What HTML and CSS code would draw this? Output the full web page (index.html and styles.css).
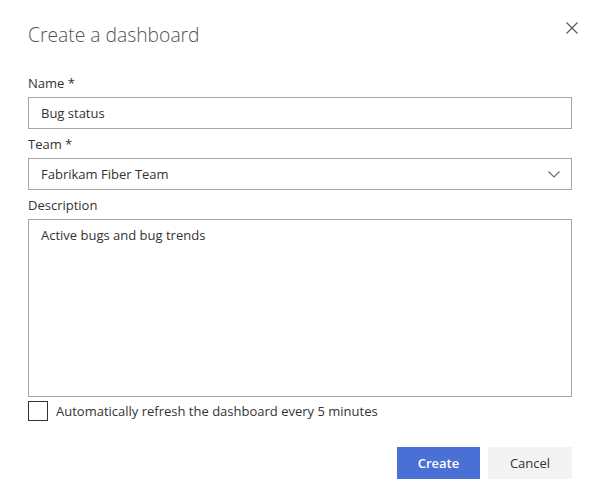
FILE: index.html
```html
<!DOCTYPE html>
<html lang="en">
<head>
<meta charset="utf-8">
<title>Create a dashboard</title>
<link rel="stylesheet" href="styles.css">
</head>
<body>
<div class="dialog">
  <div class="header">
    <h1 class="title">Create a dashboard</h1>
    <button class="close" aria-label="Close">
      <svg width="12" height="12" viewBox="0 0 12 12"><path d="M0.5 0.5 L11.5 11.5 M11.5 0.5 L0.5 11.5" stroke="#555" stroke-width="1.1" fill="none"/></svg>
    </button>
  </div>
  <div class="form">
    <label class="label">Name *</label>
    <div class="field">Bug status</div>
    <label class="label">Team *</label>
    <div class="field select">
      <span>Fabrikam Fiber Team</span>
      <svg class="chev" width="12" height="7" viewBox="0 0 12 7"><path d="M0.5 0.5 L6 6 L11.5 0.5" stroke="#666" stroke-width="1.1" fill="none"/></svg>
    </div>
    <label class="label">Description</label>
    <div class="field area">Active bugs and bug trends</div>
    <label class="check">
      <span class="box"></span>
      <span>Automatically refresh the dashboard every 5 minutes</span>
    </label>
  </div>
  <div class="footer">
    <button class="btn primary">Create</button>
    <button class="btn secondary">Cancel</button>
  </div>
</div>
</body>
</html>
```

FILE: styles.css
```css
* { box-sizing: border-box; }
html, body { margin: 0; padding: 0; background: #fff; }
body {
  font-family: "Open Sans", "Noto Sans", sans-serif;
  font-size: 13px;
  color: #333;
}
.dialog {
  width: 599px;
  padding: 0 27px 0 28px;
}
.header {
  display: flex;
  justify-content: space-between;
  align-items: flex-start;
  height: 73px;
}
.title {
  margin: 21px 0 0;
  font-size: 19.3px;
  font-weight: 300;
  line-height: 28px;
  color: #555;
}
.close {
  margin: 22px -6px 0 0;
  padding: 0;
  border: 0;
  background: none;
  width: 12px;
  height: 12px;
  display: block;
}
.close svg { display: block; }
.form { display: flex; flex-direction: column; }
.label {
  display: block;
  line-height: 20px;
  margin-bottom: 4px;
}
.field {
  height: 32px;
  border: 1px solid #a6a6a6;
  padding: 0 12px;
  display: flex;
  align-items: center;
  margin-bottom: 5px;
}
.select { justify-content: space-between; padding-right: 11px; }
.chev { display: block; }
.area {
  height: 178px;
  align-items: flex-start;
  padding-top: 6px;
  margin-bottom: 4px;
}
.check {
  display: flex;
  align-items: center;
  gap: 8px;
  height: 20px;
}
.box {
  width: 20px;
  height: 20px;
  border: 1px solid #333;
  flex: none;
}
.footer {
  display: flex;
  justify-content: flex-end;
  gap: 8px;
  margin-top: 26px;
}
.btn {
  height: 32px;
  border: 0;
  font-family: inherit;
  font-size: 13px;
  padding: 0;
}
.primary {
  width: 83px;
  background: #4a6fd5;
  color: #fff;
  font-weight: 600;
}
.secondary {
  width: 84px;
  background: #f3f3f3;
  color: #333;
}
```
